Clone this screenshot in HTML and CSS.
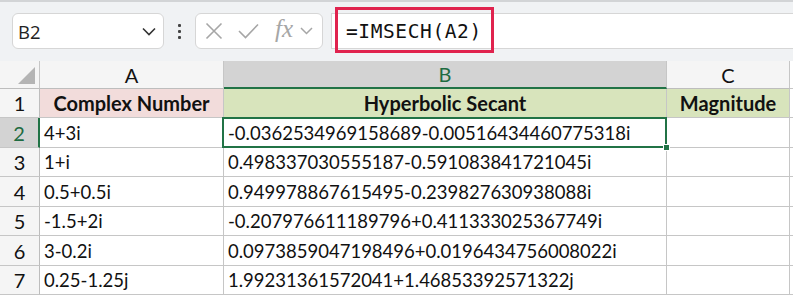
FILE: index.html
```html
<!DOCTYPE html>
<html>
<head>
<meta charset="utf-8">
<link rel="stylesheet" href="styles.css">
</head>
<body>
<div class="app">
  <div class="toolbar">
    <div class="namebox">
      <span class="name">B2</span>
      <svg class="chev-dark" width="14" height="9" viewBox="0 0 14 9"><polyline points="1,1.5 7,7.5 13,1.5" fill="none" stroke="#333" stroke-width="1.6"/></svg>
    </div>
    <div class="dots"><i></i><i></i><i></i></div>
    <div class="fnbox">
      <svg width="18" height="18" viewBox="0 0 18 18"><path d="M1.5 1.5 L16.5 16.5 M16.5 1.5 L1.5 16.5" stroke="#a6a6a6" stroke-width="1.6" fill="none"/></svg>
      <svg width="21" height="16" viewBox="0 0 21 16"><polyline points="1,8 7.5,14.5 20,1.5" stroke="#a6a6a6" stroke-width="1.6" fill="none"/></svg>
      <span class="fx">fx</span>
      <svg width="13" height="8" viewBox="0 0 13 8"><polyline points="1,1 6.5,6.5 12,1" fill="none" stroke="#a6a6a6" stroke-width="1.5"/></svg>
    </div>
    <div class="formula">
      <span class="ftext">=IMSECH(A2)</span>
      <div class="highlight"></div>
    </div>
  </div>
  <div class="sheet">
    <div class="c corner"><span class="tri"></span></div>
    <div class="c colh">A</div>
    <div class="c colh colsel">B</div>
    <div class="c colh">C</div>
    <div class="c pad"></div>

    <div class="c rowh">1</div>
    <div class="c head pink">Complex Number</div>
    <div class="c head green">Hyperbolic Secant</div>
    <div class="c head green">Magnitude</div>
    <div class="c pad"></div>

    <div class="c rowh rowsel">2</div>
    <div class="c">4+3i</div>
    <div class="c sel">-0.0362534969158689-0.00516434460775318i<span class="handle"></span></div>
    <div class="c"></div>
    <div class="c pad"></div>

    <div class="c rowh">3</div>
    <div class="c">1+i</div>
    <div class="c">0.498337030555187-0.591083841721045i</div>
    <div class="c"></div>
    <div class="c pad"></div>

    <div class="c rowh">4</div>
    <div class="c">0.5+0.5i</div>
    <div class="c">0.949978867615495-0.239827630938088i</div>
    <div class="c"></div>
    <div class="c pad"></div>

    <div class="c rowh">5</div>
    <div class="c">-1.5+2i</div>
    <div class="c">-0.207976611189796+0.411333025367749i</div>
    <div class="c"></div>
    <div class="c pad"></div>

    <div class="c rowh">6</div>
    <div class="c">3-0.2i</div>
    <div class="c">0.0973859047198496+0.0196434756008022i</div>
    <div class="c"></div>
    <div class="c pad"></div>

    <div class="c rowh">7</div>
    <div class="c">0.25-1.25j</div>
    <div class="c">1.99231361572041+1.46853392571322j</div>
    <div class="c"></div>
    <div class="c pad"></div>
  </div>
</div>
</body>
</html>
```
FILE: styles.css
```css
* { box-sizing: border-box; }
html, body { margin: 0; padding: 0; }
body { width: 793px; height: 298px; overflow: hidden; background: #fff; }
.app { width: 793px; height: 298px; display: flex; flex-direction: column; }

.toolbar {
  height: 61px;
  flex: none;
  background: #f0f2f4;
  border-top: 2px solid #d2d4d6;
  display: flex;
  align-items: flex-start;
  padding-top: 11px;
  padding-left: 12px;
}
.namebox {
  width: 152px;
  height: 36px;
  background: #fff;
  border: 1px solid #d6d6d6;
  border-radius: 6px;
  display: flex;
  align-items: center;
  justify-content: space-between;
  padding: 0 7px 0 5px;
}
.name { font-family: "Open Sans", sans-serif; font-size: 18.5px; color: #222; }
.chev-dark { margin-top: 1px; }
.dots {
  width: 31px;
  height: 36px;
  display: flex;
  flex-direction: column;
  align-items: center;
  justify-content: center;
  gap: 3px;
}
.dots i { display: block; width: 3px; height: 3px; background: #444; border-radius: 1px; }
.fnbox {
  width: 128px;
  height: 36px;
  background: #fff;
  border: 1px solid #d6d6d6;
  border-radius: 6px;
  display: flex;
  align-items: center;
  padding: 0 4px 0 9px;
  gap: 0;
}
.fnbox svg:nth-child(1) { margin-right: 15px; }
.fnbox svg:nth-child(2) { margin-right: 16px; }
.fx {
  font-family: "Liberation Serif", serif;
  font-style: italic;
  font-size: 25px;
  color: #a6a6a6;
  margin-right: 7px;
  margin-top: -4px;
}
.formula {
  position: relative;
  margin-left: 8px;
  flex: 1;
  height: 36px;
  background: #fff;
  border-top: 1px solid #d6d6d6;
  border-bottom: 1px solid #d6d6d6;
  border-left: 1px solid #d6d6d6;
  display: flex;
  align-items: center;
  padding-left: 14px;
}
.ftext { font-family: "DejaVu Sans Mono", monospace; font-size: 19.5px; color: #111; letter-spacing: 0.6px; }
.highlight {
  position: absolute;
  left: 3px;
  top: -7px;
  width: 159px;
  height: 46px;
  border: 3px solid #e0234e;
}

.sheet {
  flex: none;
  display: grid;
  grid-template-columns: 40px 184px 443px 123px 3px;
  grid-template-rows: 28px 29px 30px 29px 30px 29px 30px 29px 3px;
  font-family: Lato, sans-serif;
  font-size: 18.5px;
  color: #111;
}
.c {
  border-right: 1px solid #c6c6c6;
  border-bottom: 1px solid #c6c6c6;
  display: flex;
  align-items: center;
  padding-left: 4px;
  white-space: nowrap;
  overflow: visible;
}
.c.pad { border-right: none; padding: 0; }
.corner { background: #f5f5f5; position: relative; border-bottom-color: #bdbdbd; }
.tri {
  position: absolute;
  right: 4px;
  bottom: 4px;
  width: 0; height: 0;
  border-left: 17px solid transparent;
  border-bottom: 17px solid #b4b4b4;
}
.colh {
  background: #f5f5f5;
  justify-content: center;
  padding-left: 0;
  font-size: 20px;
  border-bottom-color: #bdbdbd;
}
.colsel {
  background: #d3d3d3;
  color: #1e6b41;
  border-bottom: 2px solid #217346;
}
.rowh {
  background: #f5f5f5;
  justify-content: center;
  padding-left: 0;
  font-size: 20px;
  border-right-color: #bdbdbd;
}
.rowsel {
  background: #d3d3d3;
  color: #1e6b41;
  border-right: 2px solid #217346;
}
.head { justify-content: center; padding-left: 0; font-weight: 700; font-size: 20px; }
.pink { background: #f2dcdb; }
.green { background: #d8e4bc; }
.sel { position: relative; }
.sel::after {
  content: "";
  position: absolute;
  left: -2px; top: -1px; right: -1px; bottom: -1px;
  border: 2px solid #217346;
  pointer-events: none;
}
.handle {
  position: absolute;
  right: -4px;
  bottom: -4px;
  width: 7px;
  height: 7px;
  background: #217346;
  border: 1px solid #fff;
  z-index: 2;
}
```
